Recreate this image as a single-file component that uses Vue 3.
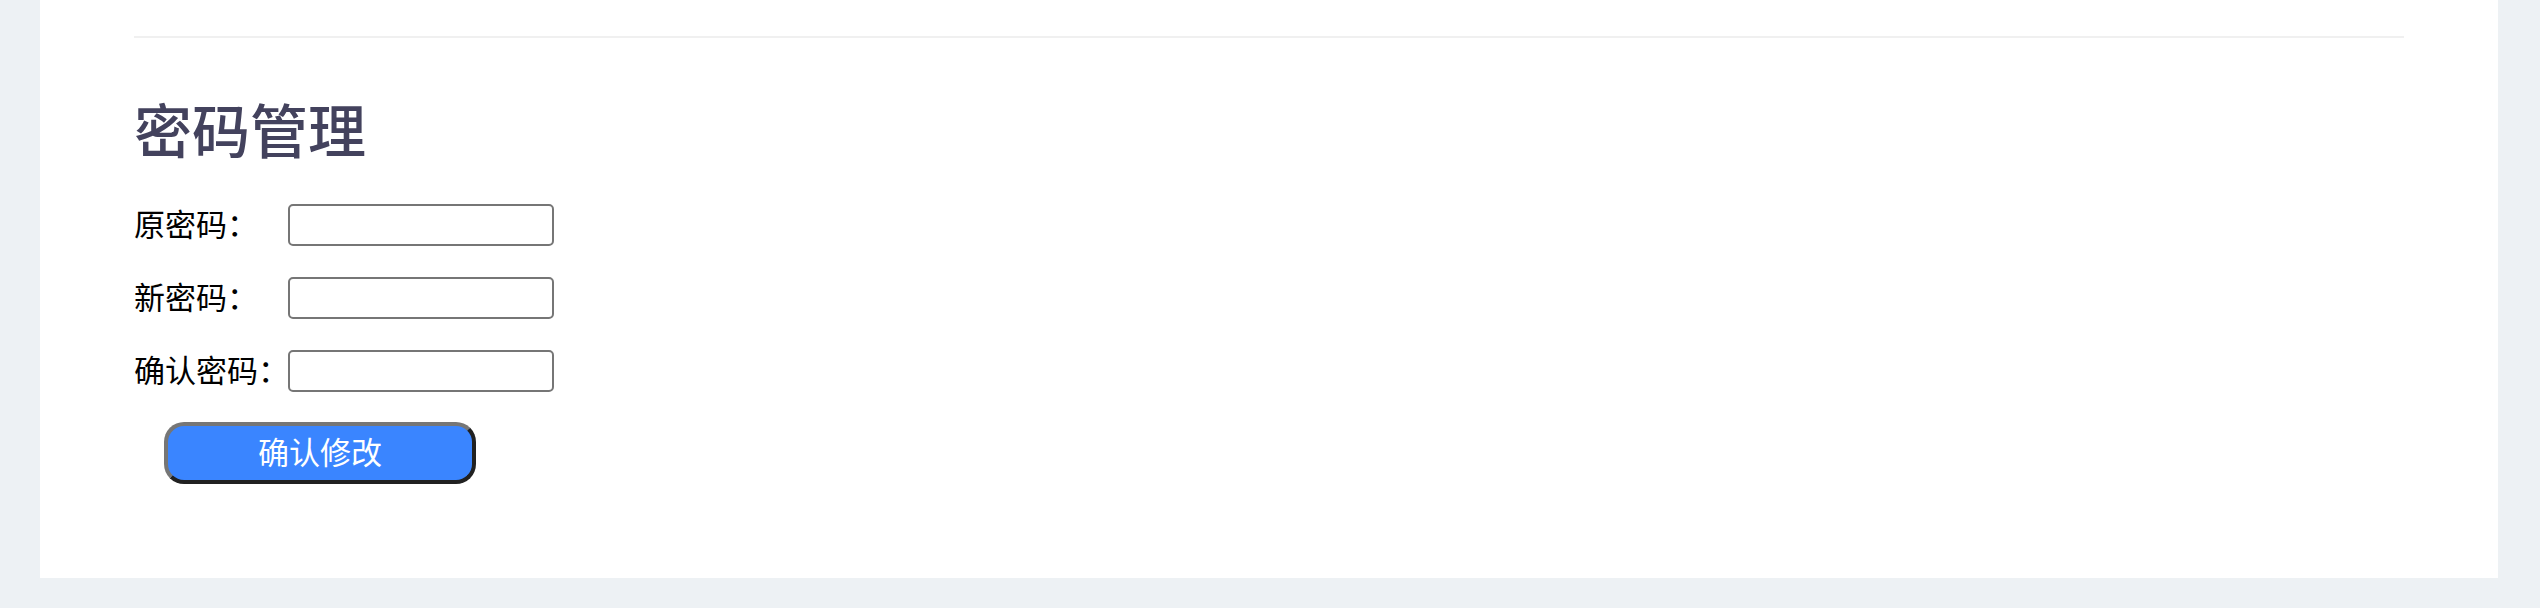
<script setup>
import { reactive } from 'vue'

const fields = [
  { id: 'old-password', label: '原密码：', autocomplete: 'current-password' },
  { id: 'new-password', label: '新密码：', autocomplete: 'new-password' },
  { id: 'confirm-password', label: '确认密码：', autocomplete: 'new-password' },
]

const form = reactive({
  'old-password': '',
  'new-password': '',
  'confirm-password': '',
})
</script>

<template>
  <main class="page">
    <section class="card">
      <hr class="divider" />
      <h3 class="title">密码管理</h3>
      <form class="form" @submit.prevent>
        <div class="fields">
          <div v-for="field in fields" :key="field.id" class="row">
            <label class="label" :for="field.id">{{ field.label }}</label>
            <input
              :id="field.id"
              v-model="form[field.id]"
              class="input"
              type="password"
              :autocomplete="field.autocomplete"
            />
          </div>
        </div>
        <button class="submit" type="submit">确认修改</button>
      </form>
    </section>
  </main>
</template>

<style>
body {
  margin: 0;
  background: #edf1f4;
}
</style>

<style scoped>
.page {
  padding: 0 42px 30px 40px;
  background: #edf1f4;
  font-family: "Noto Sans CJK SC", sans-serif;
}

.card {
  display: flow-root;
  padding: 36px 94px 94px;
  background: #fff;
}

.divider {
  height: 2px;
  margin: 0;
  border: 0;
  background: #f0f0f0;
}

.title {
  margin: 50px 0 36px;
  color: #43425d;
  font-size: 58px;
  font-weight: 500;
  line-height: 80px;
}

.form {
  display: flex;
  flex-direction: column;
  align-items: flex-start;
  gap: 30px;
}

.fields {
  display: flex;
  flex-direction: column;
  gap: 31px;
}

.row {
  display: flex;
  align-items: flex-start;
}

.label {
  width: 154px;
  color: #000;
  font-size: 31px;
  line-height: 38px;
  white-space: nowrap;
}

.input {
  box-sizing: border-box;
  width: 266px;
  height: 42px;
  padding: 2px 4px;
  border: 2px solid #767676;
  border-radius: 5px;
  background: #fff;
  font: inherit;
  font-size: 26px;
}

.submit {
  box-sizing: border-box;
  width: 312px;
  height: 62px;
  margin-left: 30px;
  padding: 0 0 4px;
  border: 4px solid;
  border-color: #767676 #212121 #212121 #767676;
  border-radius: 20px;
  background: #3a85ff;
  color: #fff;
  font-family: inherit;
  font-size: 31px;
  line-height: 42px;
}
</style>
